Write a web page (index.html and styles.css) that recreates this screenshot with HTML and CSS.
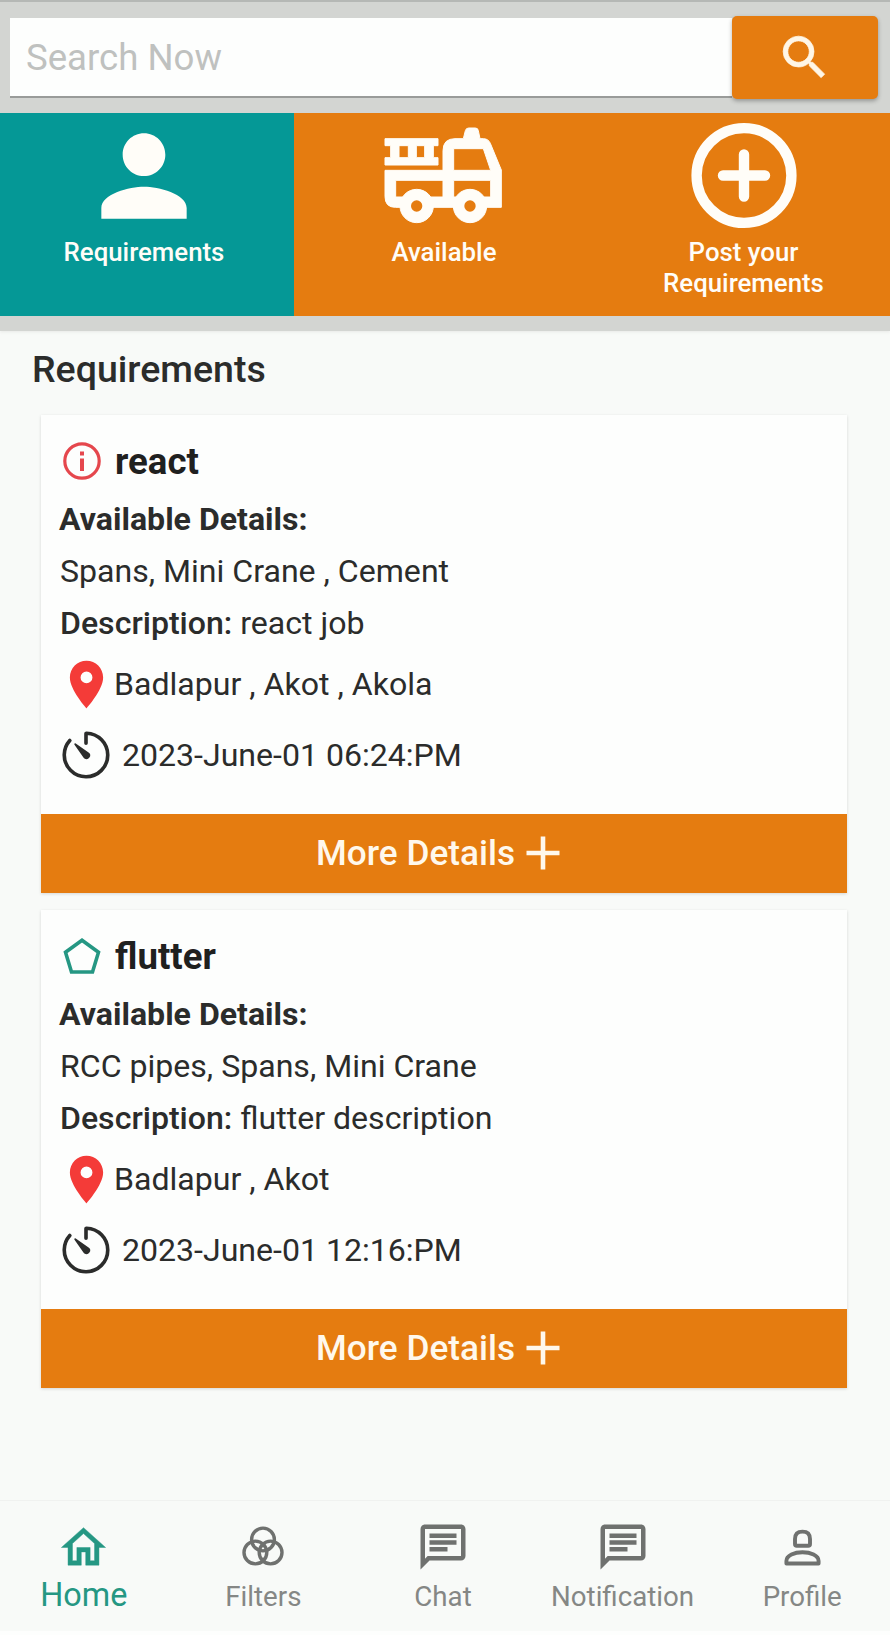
FILE: index.html
```html
<!DOCTYPE html>
<html lang="en">
<head>
<meta charset="utf-8">
<title>Requirements</title>
<link rel="stylesheet" href="styles.css">
</head>
<body>
<svg class="defs" width="0" height="0" aria-hidden="true">
  <symbol id="pin" viewBox="0 0 24 24"><path fill="currentColor" d="M12 2C8.13 2 5 5.13 5 9c0 5.25 7 13 7 13s7-7.75 7-13c0-3.87-3.13-7-7-7zm0 9.5a2.5 2.5 0 0 1 0-5 2.5 2.5 0 0 1 0 5z"/></symbol>
  <symbol id="timer" viewBox="0 0 512 512"><path fill="none" stroke="currentColor" stroke-width="32" stroke-linecap="round" stroke-linejoin="round" d="M112.91 128A191.85 191.85 0 0 0 64 254c-1.18 106.35 85.65 193.8 192 194 106.2.2 192-85.83 192-192 0-104.54-83.55-189.61-187.5-192a4.36 4.36 0 0 0-4.5 4.37V152"/><path fill="currentColor" d="M233.38 278.63l-79-113a8.13 8.13 0 0 1 11.32-11.32l113 79a32.5 32.5 0 0 1-37.25 53.26 33.21 33.21 0 0 1-8.07-7.94z"/></symbol>
  <symbol id="plus" viewBox="0 0 34 34"><path stroke="currentColor" stroke-width="4.6" d="M.5 17h33M17 .5v33"/></symbol>
  <symbol id="chat" viewBox="0 0 24 24"><path fill="currentColor" d="M4 4h16v12H5.17L4 17.17V4m0-2c-1.1 0-1.99.9-1.99 2L2 22l4-4h14c1.1 0 2-.9 2-2V4c0-1.1-.9-2-2-2H4zm2 10h8v2H6v-2zm0-3h12v2H6V9zm0-3h12v2H6V6z"/></symbol>
</svg>

<header class="top">
  <form class="search">
    <input class="search-input" type="text" placeholder="Search Now">
    <button class="search-button" type="button" aria-label="Search">
      <svg width="57" height="57" viewBox="0 0 24 24"><path fill="currentColor" stroke="currentColor" stroke-width=".3" d="M15.5 14h-.79l-.28-.27A6.47 6.47 0 0 0 16 9.5 6.5 6.5 0 1 0 9.5 16c1.61 0 3.09-.59 4.23-1.57l.27.28v.79l5 4.99L20.49 19l-4.99-5zm-6 0C7.01 14 5 11.99 5 9.5S7.01 5 9.5 5 14 7.01 14 9.5 11.99 14 9.5 14z"/></svg>
    </button>
  </form>
  <nav class="tabs">
    <a class="tab tab-active">
      <span class="tab-icon"><svg width="128" height="128" viewBox="0 0 24 24"><path fill="currentColor" d="M12 12c2.21 0 4-1.79 4-4s-1.79-4-4-4-4 1.79-4 4 1.79 4 4 4zm0 2c-2.67 0-8 1.34-8 4v2h16v-2c0-2.66-5.33-4-8-4z"/></svg></span>
      <span class="tab-label">Requirements</span>
    </a>
    <a class="tab">
      <span class="tab-icon"><svg width="140" height="115" viewBox="0 0 420 345"><g fill="currentColor" stroke="currentColor" stroke-width="3"><path fill-rule="evenodd" d="M33 62H192V83H178V119H192V141H33V119H50V83H33ZM75 83V119H103V83ZM127 83V119H152V83Z"/><path fill-rule="evenodd" d="M33 157H207V98Q207 62 243 62H268L274 38Q276 30 284 30H304Q312 30 313 38L318 62H328Q343 62 349 76L382 156V268H65Q33 268 33 236ZM65 187V237H207V187ZM239 92V157H350L328 92ZM239 187V237H350V187Z"/><circle cx="128" cy="264" r="50"/><circle cx="288" cy="264" r="50"/></g><circle class="hub" cx="128" cy="264" r="17"/><circle class="hub" cx="288" cy="264" r="17"/></svg></span>
      <span class="tab-label">Available</span>
    </a>
    <a class="tab">
      <span class="tab-icon"><svg width="110" height="110" viewBox="0 0 110 110"><g fill="none" stroke="currentColor" stroke-width="10.4" stroke-linecap="round"><circle cx="55" cy="54.5" r="47.4"/><path d="M34 54.5h42M55 33.5v42"/></g></svg></span>
      <span class="tab-label">Post your<br>Requirements</span>
    </a>
  </nav>
</header>

<main class="content">
  <h1 class="heading">Requirements</h1>

  <article class="card">
    <div class="card-body">
      <h2 class="card-title">
        <svg class="status status-alert" viewBox="0 0 38 38"><circle cx="19" cy="19" r="17.2" fill="none" stroke="currentColor" stroke-width="3.2"/><path fill="currentColor" d="M17 16.5h4v12.5h-4zM17 9.5h4v4h-4z"/></svg>
        react
      </h2>
      <p class="line line-strong">Available Details:</p>
      <p class="line">Spans, Mini Crane , Cement</p>
      <p class="line"><span class="term">Description:</span> react job</p>
      <p class="place"><svg class="place-icon"><use href="#pin"/></svg>Badlapur , Akot , Akola</p>
      <p class="time"><svg class="time-icon"><use href="#timer"/></svg>2023-June-01 06:24:PM</p>
    </div>
    <button class="more" type="button">More Details <svg class="more-icon"><use href="#plus"/></svg></button>
  </article>

  <article class="card">
    <div class="card-body">
      <h2 class="card-title">
        <svg class="status status-ok" viewBox="0 0 38 38"><path fill="none" stroke="currentColor" stroke-width="3.6" d="M19 3.2L35.5 15.3L29.5 35H8.5L2.5 15.3Z"/></svg>
        flutter
      </h2>
      <p class="line line-strong">Available Details:</p>
      <p class="line">RCC pipes, Spans, Mini Crane</p>
      <p class="line"><span class="term">Description:</span> flutter description</p>
      <p class="place"><svg class="place-icon"><use href="#pin"/></svg>Badlapur , Akot</p>
      <p class="time"><svg class="time-icon"><use href="#timer"/></svg>2023-June-01 12:16:PM</p>
    </div>
    <button class="more" type="button">More Details <svg class="more-icon"><use href="#plus"/></svg></button>
  </article>
</main>

<nav class="bottom">
  <a class="item item-active">
    <span class="item-icon"><svg width="53" height="53" viewBox="0 0 24 24"><path fill="currentColor" stroke="currentColor" stroke-width=".2" d="M12 5.69l5 4.5V18h-2v-6H9v6H7v-7.81l5-4.5M12 3L2 12h3v8h6v-6h2v6h6v-8h3L12 3z"/></svg></span>
    <span class="item-label">Home</span>
  </a>
  <a class="item">
    <span class="item-icon"><svg width="44" height="44" viewBox="0 0 44 44"><g fill="none" stroke="currentColor" stroke-width="3.4"><circle cx="22" cy="14.5" r="11.4"/><circle cx="14.4" cy="27.5" r="11.4"/><circle cx="29.6" cy="27.5" r="11.4"/></g></svg></span>
    <span class="item-label">Filters</span>
  </a>
  <a class="item">
    <span class="item-icon"><svg width="54" height="54"><use href="#chat"/></svg></span>
    <span class="item-label">Chat</span>
  </a>
  <a class="item">
    <span class="item-icon"><svg width="54" height="54"><use href="#chat"/></svg></span>
    <span class="item-label">Notification</span>
  </a>
  <a class="item">
    <span class="item-icon"><svg width="44" height="44" viewBox="0 0 44 44"><g fill="none" stroke="currentColor" stroke-width="3.9" stroke-linejoin="round"><path d="M15 19V14Q15 6.6 22.5 6.6T30 14V19Q30 20.8 28.2 20.8H16.8Q15 20.8 15 19Z"/><path d="M6.4 38.5V36C6.4 30.5 14.5 27.3 22.5 27.3S38.6 30.5 38.6 36V38.5Z"/></g></svg></span>
    <span class="item-label">Profile</span>
  </a>
</nav>
</body>
</html>
```
FILE: styles.css
```css
* { box-sizing: border-box; }

body {
  margin: 0;
  height: 1635px;
  display: flex;
  flex-direction: column;
  overflow: hidden;
  background: #f8faf8;
  color: #2b2c2b;
  font-family: Roboto, sans-serif;
  font-size: 32.1px;
}

h1, h2, p { margin: 0; }
svg { flex: none; }
.defs { display: none; }

.top {
  padding: 14px 0 15px;
  background: #d3d5d2;
  border-top: 2px solid #b5b8b5;
  box-shadow: 0 1px 3px #e8e9e7;
}

.search {
  display: flex;
  padding: 0 12px 0 10px;
  height: 97px;
}

.search-input {
  flex: 1;
  min-width: 0;
  height: 80px;
  margin-top: 2px;
  padding: 0 16px;
  border: 0;
  border-bottom: 2px solid #999b99;
  background: #fdfefd;
  font: 400 36.6px Roboto, sans-serif;
}
.search-input::placeholder { color: #bfc1bf; opacity: 1; }

.search-button {
  display: flex;
  align-items: center;
  justify-content: center;
  width: 146px;
  height: 83px;
  padding: 0 2px 1px 0;
  border: 0;
  border-radius: 5px;
  background: #e57c10;
  color: #fff6e6;
  box-shadow: 0 2px 4px rgba(0, 0, 0, .3);
}

.tabs {
  display: grid;
  grid-template-columns: 294px 300px 296px;
  height: 203px;
  background: #e57c10;
}

.tab {
  display: flex;
  flex-direction: column;
  align-items: center;
  color: #fffdf8;
  text-align: center;
}
.tab-active { padding-right: 6px; background: #059896; }
.tab:last-child { padding-left: 3px; }

.tab-icon {
  display: flex;
  align-items: center;
  height: 125px;
}
.tab-icon svg { margin: -2px 0; }
.tab-label { margin-top: -1px; font-size: 25.8px; font-weight: 500; line-height: 30.5px; }
.hub { fill: #e57c10; }

.content { flex: 1; padding: 15px 43px 0 41px; }

.heading {
  margin: 0 0 23px -9px;
  font-size: 37.5px;
  font-weight: 500;
  line-height: 46px;
}

.card {
  height: 478px;
  margin-bottom: 17px;
  display: flex;
  flex-direction: column;
  background: #fdfefd;
  box-shadow: 0 1px 3px rgba(0, 0, 0, .14);
}
.card-body { flex: 1; padding: 19px 18px 0; }

.card-title {
  display: flex;
  align-items: center;
  gap: 14px;
  height: 54px;
  padding-left: 4px;
  margin-bottom: 5px;
  color: #1f201f;
  font-size: 36.6px;
  font-weight: 700;
}
.status { width: 38px; height: 38px; }
.status-alert { color: #e5474d; }
.status-ok { color: #259783; }

.line { line-height: 52px; padding-left: 1px; }
.line-strong { font-weight: 700; padding-left: 0; }
.term { font-weight: 500; }

.place { display: flex; align-items: center; height: 68px; padding-top: 2px; }
.place-icon { width: 57px; height: 57px; margin: 0 -1px 0 -1px; color: #f43b38; }

.time { display: flex; align-items: center; height: 70px; margin-top: 3px; gap: 9px; }
.time-icon { width: 58px; height: 58px; margin: 0 -2px; }

.more {
  display: flex;
  align-items: center;
  justify-content: center;
  gap: 11px;
  height: 79px;
  padding: 0 12px 2px 0;
  border: 0;
  background: #e57c10;
  color: #fff8ec;
  font: 500 35.2px Roboto, sans-serif;
}
.more-icon { width: 34px; height: 34px; }

.bottom {
  display: grid;
  grid-template-columns: repeat(5, 1fr);
  height: 135px;
  margin: 0 -2px 0 -6px;
  padding-top: 23px;
  border-top: 1px solid #f0f2f0;
  border-bottom: 4px solid #fdfefd;
}

.item {
  display: flex;
  flex-direction: column;
  align-items: center;
  color: #6f716f;
}
.item-icon { display: flex; align-items: center; height: 46px; }
.item-label { color: #858785; font-size: 27.7px; line-height: 50px; margin-top: 2px; }
.item-active, .item-active .item-label { color: #259783; }
.item-active .item-label { font-size: 32.4px; line-height: 47px; }
```
